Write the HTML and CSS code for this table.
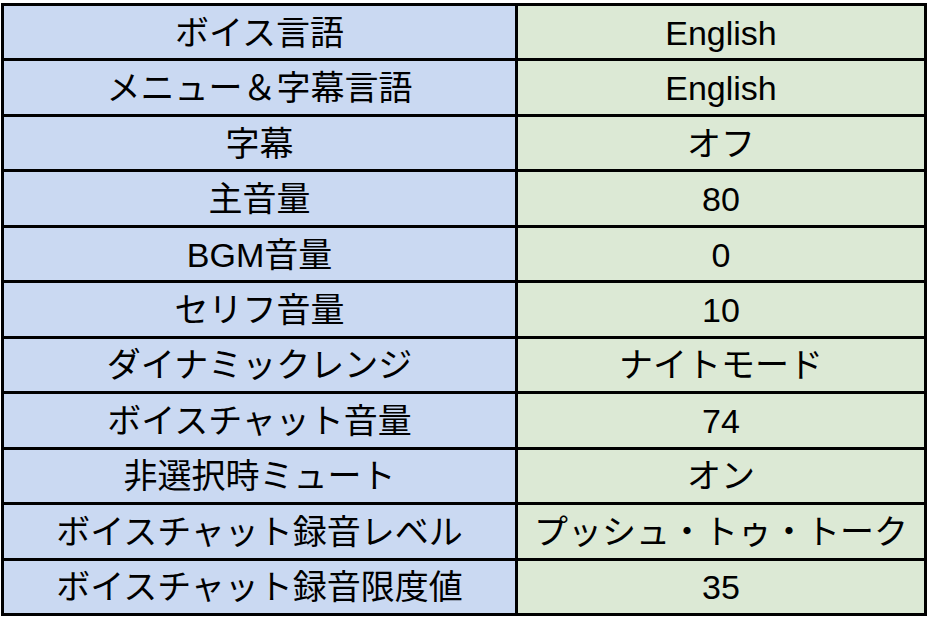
FILE: index.html
```html
<!DOCTYPE html>
<html lang="ja">
<head>
<meta charset="utf-8">
<title>設定</title>
<link rel="stylesheet" href="styles.css">
</head>
<body>
<div class="settings">
  <div class="cell key">ボイス言語</div><div class="cell val">English</div>
  <div class="cell key">メニュー＆字幕言語</div><div class="cell val">English</div>
  <div class="cell key">字幕</div><div class="cell val">オフ</div>
  <div class="cell key">主音量</div><div class="cell val">80</div>
  <div class="cell key">BGM音量</div><div class="cell val">0</div>
  <div class="cell key">セリフ音量</div><div class="cell val">10</div>
  <div class="cell key">ダイナミックレンジ</div><div class="cell val">ナイトモード</div>
  <div class="cell key">ボイスチャット音量</div><div class="cell val">74</div>
  <div class="cell key">非選択時ミュート</div><div class="cell val">オン</div>
  <div class="cell key">ボイスチャット録音レベル</div><div class="cell val">プッシュ・トゥ・トーク</div>
  <div class="cell key">ボイスチャット録音限度値</div><div class="cell val">35</div>
</div>
</body>
</html>
```

FILE: styles.css
```css
html, body {
  margin: 0;
  padding: 0;
  background: #ffffff;
}
body {
  font-family: "Liberation Sans", "Noto Sans CJK JP", sans-serif;
  color: #000000;
}
.settings {
  box-sizing: border-box;
  display: grid;
  grid-template-columns: 511px 406px;
  grid-auto-rows: 1fr;
  gap: 3px;
  padding: 3px;
  background: #000000;
  width: 926px;
  height: 613px;
  margin: 3px 0 0 1px;
}
.cell {
  display: flex;
  align-items: center;
  justify-content: center;
  font-size: 34px;
  line-height: 1;
  white-space: nowrap;
  padding-top: 1px;
}
.key {
  background: #cad9f2;
}
.val {
  background: #dce9d5;
}
```
